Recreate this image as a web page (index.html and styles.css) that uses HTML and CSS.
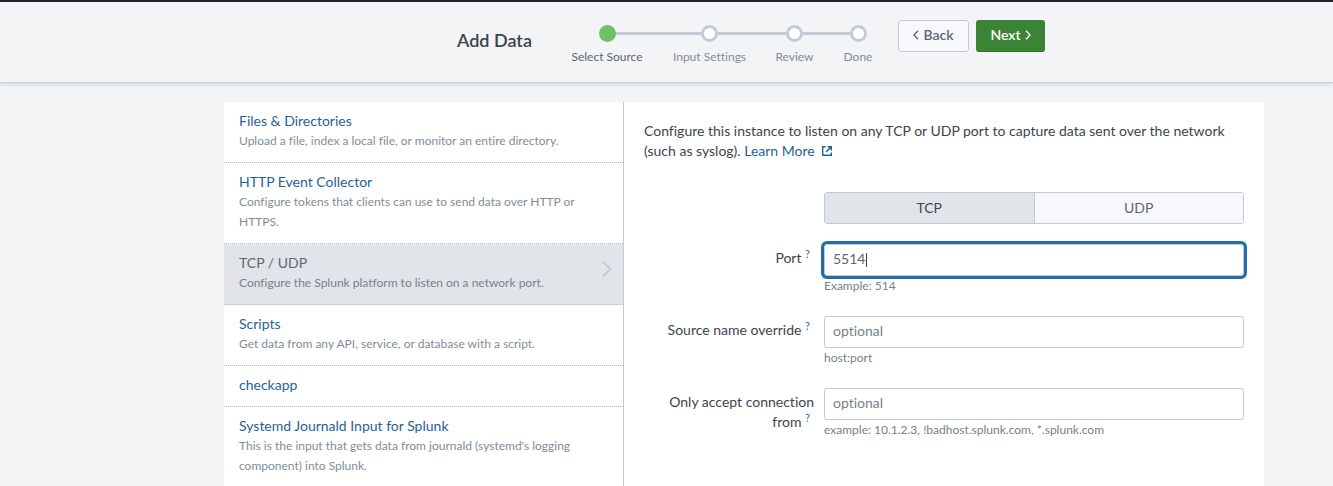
FILE: index.html
```html
<!DOCTYPE html>
<html lang="en">
<head>
<meta charset="utf-8">
<title>Add Data</title>
<link rel="stylesheet" href="styles.css">
</head>
<body>
<header class="topbar">
  <h1 class="page-title">Add Data</h1>
  <ol class="steps">
    <li class="step step-current" aria-current="step"><span class="dot"></span>Select Source</li>
    <li class="step"><span class="dot"></span>Input Settings</li>
    <li class="step"><span class="dot"></span>Review</li>
    <li class="step"><span class="dot"></span>Done</li>
  </ol>
  <div class="actions">
    <button class="btn" type="button"><svg width="6" height="10" viewBox="0 0 6 10"><path d="M5 .7 1 5l4 4.300"/></svg>Back</button>
    <button class="btn btn-primary" type="button">Next<svg width="6" height="10" viewBox="0 0 6 10"><path d="M1 .7 5 5 1 9.300"/></svg></button>
  </div>
</header>
<main class="panel">
  <nav class="sources" aria-label="Sources">
    <a class="source" href="#files"><span class="source-name">Files &amp; Directories</span><span class="source-desc">Upload a file, index a local file, or monitor an entire directory.</span></a>
    <a class="source" href="#http"><span class="source-name">HTTP Event Collector</span><span class="source-desc">Configure tokens that clients can use to send data over HTTP or HTTPS.</span></a>
    <a class="source source-active" href="#tcp" aria-current="true"><span class="source-name">TCP / UDP</span><span class="source-desc">Configure the Splunk platform to listen on a network port.</span><svg class="chevron" width="10" height="16" viewBox="0 0 10 16"><path d="M1 .8 8.500 8 1 15.200"/></svg></a>
    <a class="source" href="#scripts"><span class="source-name">Scripts</span><span class="source-desc">Get data from any API, service, or database with a script.</span></a>
    <a class="source" href="#checkapp"><span class="source-name">checkapp</span></a>
    <a class="source" href="#journald"><span class="source-name">Systemd Journald Input for Splunk</span><span class="source-desc">This is the input that gets data from journald (systemd's logging component) into Splunk.</span></a>
  </nav>
  <form class="config">
    <p class="intro">Configure this instance to listen on any TCP or UDP port to capture data sent over the network (such as syslog). <a class="link" href="#learn">Learn More<svg class="external" width="10" height="10" viewBox="0 0 10 10"><path d="M3.500.7H.7v8.600h8.600V6.500M5.500.7h3.800v3.800M9.300.7 4 6"/></svg></a></p>
    <div class="row">
      <div class="toggle" role="group" aria-label="Protocol">
        <button class="toggle-btn toggle-on" type="button" aria-pressed="true">TCP</button>
        <button class="toggle-btn" type="button" aria-pressed="false">UDP</button>
      </div>
    </div>
    <div class="row">
      <div class="label"><label for="port">Port</label> <a class="tip" href="#port-help">?</a></div>
      <div class="field field-focus">
        <input class="input" id="port" type="text" value="5514">
        <span class="caret"></span>
        <span class="help">Example: 514</span>
      </div>
    </div>
    <div class="row">
      <div class="label"><label for="source">Source name override</label> <a class="tip" href="#source-help">?</a></div>
      <div class="field">
        <input class="input" id="source" type="text" placeholder="optional">
        <span class="help">host:port</span>
      </div>
    </div>
    <div class="row">
      <div class="label"><label for="accept">Only accept connection from</label> <a class="tip" href="#accept-help">?</a></div>
      <div class="field">
        <input class="input" id="accept" type="text" placeholder="optional">
        <span class="help">example: 10.1.2.3, !badhost.splunk.com, *.splunk.com</span>
      </div>
    </div>
  </form>
</main>
</body>
</html>
```
FILE: styles.css
```css
* {
  box-sizing: border-box;
}

body {
  margin: 0;
  min-height: 100vh;
  display: flex;
  flex-direction: column;
  background: #f2f4f5;
  color: #3c444d;
  font: 14px/20px Lato, "Liberation Sans", sans-serif;
  font-variant-ligatures: none;
}

a {
  text-decoration: none;
}

svg {
  fill: none;
  stroke: currentColor;
}

.topbar {
  display: flex;
  align-items: flex-start;
  height: 83px;
  padding-left: 457px;
  border-top: 2px solid #22262c;
  border-bottom: 1px solid #c9d3da;
  box-shadow: 0 1px 4px rgba(60, 75, 110, 0.2);
}

.page-title {
  width: 100px;
  margin: 27px 0 0;
  font-size: 18px;
  line-height: 22px;
  font-weight: 600;
}

.steps {
  display: grid;
  grid-template-columns: 100px 105px 65px 62px;
  margin: 23px 0 0;
  padding: 0;
  list-style: none;
}

.step {
  position: relative;
  display: flex;
  flex-direction: column;
  align-items: center;
  gap: 5px;
  color: #818d99;
  font-size: 12px;
}

.step::before {
  content: "";
  position: absolute;
  top: 7px;
  left: 0;
  right: 0;
  height: 3px;
  background: #c3cbd4;
}

.step:first-child::before {
  left: 50%;
}

.step:last-child::before {
  right: 50%;
}

.step-current {
  color: #5c6773;
}

.dot {
  position: relative;
  width: 17px;
  height: 17px;
  border: 3px solid #c3cbd4;
  border-radius: 50%;
  background: #fff;
}

.step-current .dot {
  border-color: #71c067;
  background: #71c067;
}

.actions {
  display: flex;
  gap: 7px;
  margin: 18px 0 0 9px;
}

.btn {
  display: flex;
  align-items: center;
  justify-content: center;
  gap: 4px;
  width: 71px;
  height: 32px;
  padding: 0 0 2px;
  border: 1px solid #c3cbd4;
  border-radius: 3px;
  background: #f7f8fa;
  color: #5c6773;
  font: inherit;
  font-weight: 600;
}

.btn svg {
  stroke-width: 1.4;
}

.btn-primary {
  width: 69px;
  border-color: #3c8435;
  border-bottom-color: #307029;
  background: #3c8435;
  color: #fff;
}

.panel {
  display: flex;
  flex: 1;
  margin: 19px 69px 0 224px;
  background: #fff;
}

.sources {
  flex: 0 0 400px;
  border-right: 1px solid #c3cbd4;
}

.source {
  position: relative;
  display: block;
  padding: 9px 45px 11px 15px;
  border-bottom: 1px dotted #b3bbc4;
  color: #1f6396;
}

.source-name,
.source-desc {
  display: block;
}

.source-desc {
  color: #818d99;
  font-size: 12px;
}

.source-active {
  background: #e1e4e9;
}

.source-active .source-name {
  color: #5c6773;
}

.source-active .source-desc {
  color: #76818d;
}

.chevron {
  position: absolute;
  top: 17px;
  right: 11px;
  color: #c3cbd4;
  stroke-width: 2;
}

.config {
  flex: 1;
  display: flex;
  flex-direction: column;
  gap: 20px;
  padding: 19px 20px 20px;
}

.intro {
  margin: 0 0 11px;
}

.link {
  color: #1f6396;
}

.external {
  margin-left: 7px;
  stroke-width: 1.4;
}

.row {
  display: grid;
  grid-template-columns: 170px 1fr;
  column-gap: 10px;
}

.label {
  padding-top: 4px;
  text-align: right;
}

.tip {
  margin-right: 4px;
  color: #226da6;
  font-size: 11px;
  line-height: 0;
  vertical-align: 5px;
}

.toggle {
  grid-column: 2;
  display: flex;
  height: 32px;
  border: 1px solid #c3cbd4;
  border-radius: 3px;
  overflow: hidden;
}

.toggle-btn {
  flex: 1;
  padding: 0 0 1px;
  border: 0;
  background: #f7f8fa;
  color: #5c6773;
  font: inherit;
}

.toggle-on {
  border-right: 1px solid #c3cbd4;
  background: #e1e4e9;
  color: #3c444d;
}

.field {
  position: relative;
}

.input {
  display: block;
  width: 100%;
  height: 32px;
  padding: 0 8px 3px;
  border: 1px solid #c3cbd4;
  border-radius: 3px;
  outline: 0;
  background: #fff;
  color: #5c6773;
  font: inherit;
}

.input::placeholder {
  color: #76818d;
  opacity: 1;
}

.field-focus .input {
  box-shadow: 0 0 0 3px #226da6;
}

.caret {
  position: absolute;
  top: 9px;
  left: 42px;
  width: 1px;
  height: 14px;
  background: #3c444d;
}

.help {
  display: block;
  color: #76818d;
  font-size: 12px;
}
```
